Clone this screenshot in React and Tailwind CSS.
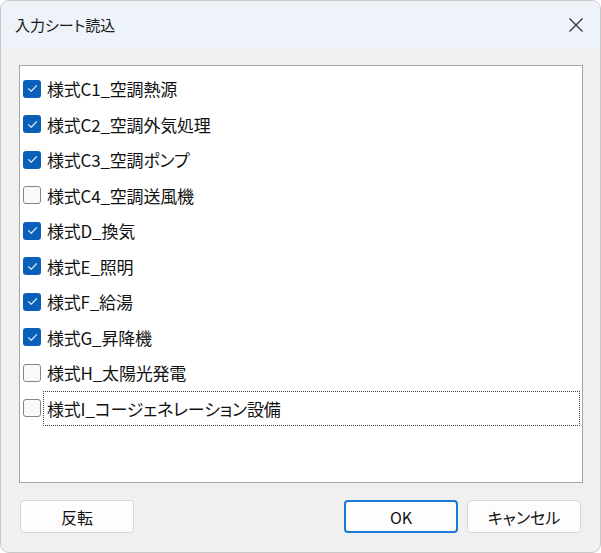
const items = [
  { label: '様式C1_空調熱源', checked: true },
  { label: '様式C2_空調外気処理', checked: true },
  { label: '様式C3_空調ポンプ', checked: true },
  { label: '様式C4_空調送風機', checked: false },
  { label: '様式D_換気', checked: true },
  { label: '様式E_照明', checked: true },
  { label: '様式F_給湯', checked: true },
  { label: '様式G_昇降機', checked: true },
  { label: '様式H_太陽光発電', checked: false },
  { label: '様式I_コージェネレーション設備', checked: false, focused: true },
]

function CheckBox({ checked }) {
  if (checked) {
    return (
      <div className="w-[18px] h-[18px] shrink-0 rounded-[3px] bg-[#0a5fb8] flex items-center justify-center">
        <svg width="11" height="9" viewBox="0 0 11 9" fill="none">
          <path d="M1.5 4.6 L4.2 7.2 L9.5 1.8" stroke="#cfe3f8" strokeWidth="1.3" strokeLinecap="round" strokeLinejoin="round" />
        </svg>
      </div>
    )
  }
  return <div className="w-[18px] h-[18px] shrink-0 rounded-[3px] border border-[#858585] bg-[#f9f9f9]"></div>
}

export default function App() {
  return (
    <div
      className="w-[601px] h-[553px] bg-white [font-feature-settings:'palt']"
      style={{ fontFamily: '"Noto Sans CJK JP", "Liberation Sans", sans-serif' }}
    >
      <div className="w-[601px] h-[553px] rounded-[9px] border border-[#c8c8c8] bg-[#f0f0f0] overflow-hidden flex flex-col">
        {/* Title bar */}
        <div className="h-[48px] shrink-0 bg-[#eef2f9] flex items-center justify-between pl-[14px] pr-[16px]">
          <span className="text-[15px] text-[#1a1a1a]">入力シート読込</span>
          <svg width="16" height="16" viewBox="0 0 16 16">
            <path d="M1.5 1.5 L14.5 14.5 M14.5 1.5 L1.5 14.5" stroke="#333" strokeWidth="1.3" />
          </svg>
        </div>

        {/* List */}
        <div className="mt-[16px] ml-[18px] mr-[17px] h-[418px] border border-[#a5a5a5] bg-white pt-[5px] pl-[3px] pr-[2px]">
          {items.map((item) => (
            <div key={item.label} className="h-[35.5px] flex items-center">
              <CheckBox checked={item.checked} />
              <div
                className={
                  'flex-1 h-[35.5px] flex items-center pl-[3px] ml-[2px] text-[17px] text-[#111] tracking-[-0.2px] ' +
                  (item.focused ? 'border border-dotted border-[#444]' : 'border border-transparent')
                }
              >
                {item.label}
              </div>
            </div>
          ))}
        </div>

        {/* Buttons */}
        <div className="flex items-center mt-[17px] px-[19px]">
          <button className="w-[114px] h-[33px] rounded-[4px] border border-[#d6d6d6] bg-[#fdfdfd] text-[16px] text-[#111]">
            反転
          </button>
          <div className="flex-1"></div>
          <button className="w-[114px] h-[33px] rounded-[4px] border-2 border-[#1c78d4] bg-[#fdfdfd] text-[16px] text-[#111]">
            OK
          </button>
          <button className="ml-[9px] w-[114px] h-[33px] rounded-[4px] border border-[#d6d6d6] bg-[#fdfdfd] text-[16px] text-[#111]">
            キャンセル
          </button>
        </div>
      </div>
    </div>
  )
}
